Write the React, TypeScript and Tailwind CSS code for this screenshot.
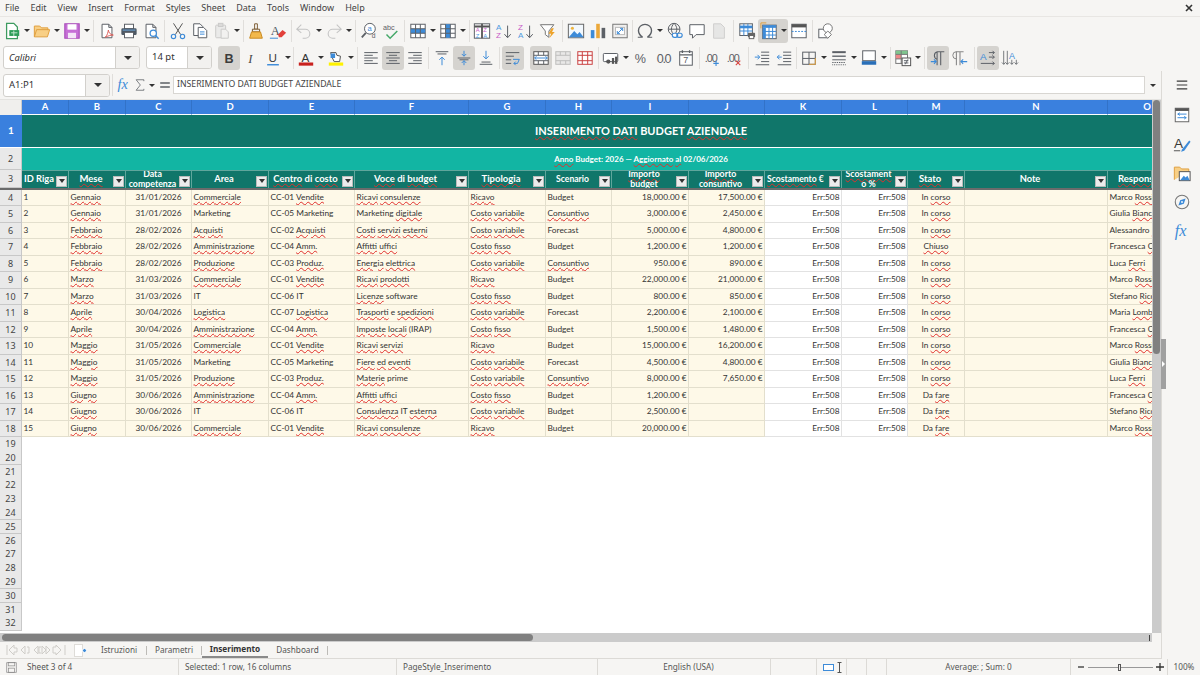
import React from "react";

const G = "#5c6066";
const B = "#3d8bd8";
const L = "#c4c4c4";

function S({ children, s = 18 }: { children?: React.ReactNode; s?: number }) {
  return (
    <svg width={s} height={s} viewBox="0 0 20 20" fill="none" stroke={G} strokeWidth={1.1}>
      {children}
    </svg>
  );
}

function Btn({ children, on, cls }: { children?: React.ReactNode; on?: boolean; cls?: string }) {
  return (
    <div className={`h-[24px] flex items-center justify-center shrink-0 rounded-[3px] ${cls ?? "w-[22px]"} ${on ? "bg-[#d5d3cf]" : ""}`}>
      {children}
    </div>
  );
}
function Arr({ on, cls }: { on?: boolean; cls?: string }) {
  return (
    <div className={`h-[24px] flex items-center justify-center shrink-0 ${cls ?? "w-[8px]"} ${on ? "bg-[#d5d3cf] rounded-r-[3px]" : ""}`}>
      <div className="w-0 h-0 border-l-[3px] border-r-[3px] border-t-[3px] border-l-transparent border-r-transparent border-t-[#333]" />
    </div>
  );
}
function Sep({ cls }: { cls: string }) {
  return (
    <div className={`h-[22px] flex justify-center shrink-0 ${cls}`}>
      <div className="w-px h-full bg-[#e0dedb]" />
    </div>
  );
}
const Doc = ({ c = G }: { c?: string }) => <path d="M4.5 2.5h7.5l3.5 3.5v11.5h-11zM12 2.5v3.5h3.5" stroke={c} fill="#fff" />;
const Lines = ({ d }: { d: string }) => <path d={d} />;

const IconSet: Record<string, React.ReactNode> = {
  new: <><path d="M4 1.5h8l4 4v13h-12z" stroke="#3d9b5f" fill="#fff" strokeWidth={1.4} /><rect x="7" y="9" width="11" height="6.5" fill="#2f9e5a" stroke="none" /><path d="M9 12h7M12 9.5v6" stroke="#bfe6cc" /></>,
  open: <path d="M1.5 16.5v-12h6l2 2h7v2.5M1.5 16.5l2.5-8h14.5l-2.5 8z" stroke="#e0a040" fill="#f8cf85" />,
  save: <><path d="M2 2h16v16h-16z" stroke="#a84bb8" fill="#c66fd6" strokeWidth={1.2} /><rect x="5" y="2.5" width="10" height="6" fill="#fff" stroke="none" /><rect x="5.5" y="12" width="9" height="6" fill="#f4e5f7" stroke="none" /></>,
  pdf: <><Doc /><path d="M8 17c3-3 3-6 3.5-8 .5 3 2 5 5.5 5.5-3 0-6 1-9 2.5z" stroke="#d9534f" strokeWidth={1} /></>,
  print: <><rect x="5" y="2.5" width="10" height="5" stroke={G} fill="#fff" /><rect x="1.5" y="7" width="17" height="7.5" rx="1.5" fill="#4d5864" stroke="none" /><rect x="5" y="11.5" width="10" height="6" fill="#fff" stroke={G} /><path d="M3 9h14" stroke="#6fa8dc" /></>,
  preview: <><Doc /><circle cx="12.5" cy="12.5" r="3.5" stroke={B} fill="#fff" strokeWidth={1.4} /><path d="M15 15l3.5 3.5" stroke={B} strokeWidth={1.6} /></>,
  cut: <><path d="M5 1.5l8 12.5M15 1.5l-8 12.5" stroke="#555" /><circle cx="5" cy="16" r="2.4" stroke={B} strokeWidth={1.3} /><circle cx="15" cy="16" r="2.4" stroke={B} strokeWidth={1.3} /></>,
  copy: <><path d="M3 2h7l3 3v10h-10z" fill="#fff" /><path d="M8 6h6l3.5 3.5v8h-9.5z" fill="#fff" /><path d="M10 11h5M10 13.5h5" stroke={B} /></>,
  paste: <g opacity=".45"><rect x="3" y="3.5" width="11" height="14" rx="1" fill="#ddd" stroke="#999" /><rect x="6" y="1.5" width="5" height="3.5" fill="#bbb" stroke="#999" /><path d="M9 8h5l3 3v7h-8z" fill="#eee" stroke="#999" /></g>,
  clone: <><path d="M8.5 2h3v6h-3z" stroke="#7a5a30" fill="#fff" /><path d="M6 8h8v3h-8z" stroke="#7a5a30" fill="#eee" /><path d="M5 11h10l2 7h-14z" fill="#f2b84b" stroke="#c98a20" /></>,
  clear: <><text x="2" y="14" fontSize="14" fill="#4a5560" stroke="none" fontFamily="Liberation Serif">A</text><path d="M10 14l5-5 4 3-5 5h-3z" fill="#e2403a" stroke="none" /><path d="M1 18h9" stroke={B} /></>,
  undo: <path d="M7 3l-5 5 5 4M2.5 8h9a5 5 0 0 1 0 10h-3" stroke={L} strokeWidth={1.2} />,
  redo: <path d="M13 3l5 5-5 4M17.5 8h-9a5 5 0 0 0 0 10h3" stroke={L} strokeWidth={1.2} />,
  find: <><circle cx="11" cy="7.5" r="6" fill="#fff" stroke={G} /><text x="8.2" y="10.5" fontSize="8.5" fill={B} stroke="none" fontFamily="Liberation Sans">a</text><path d="M6.5 12l-4.5 5" stroke={G} strokeWidth={2} /><text x="13" y="18" fontSize="7.5" fill={G} stroke="none" fontFamily="Liberation Sans">d</text></>,
  spell: <><text x="1" y="9" fontSize="8" fill={G} stroke="none" fontFamily="Liberation Sans">abc</text><path d="M5 14l4 4 8-8" stroke="#44a868" strokeWidth={1.6} /></>,
  row: <><rect x="2" y="2.5" width="16" height="15" fill="#fff" /><rect x="2" y="7.5" width="16" height="5" fill={B} stroke="none" /><path d="M7.3 2.5v15M12.6 2.5v15M2 7.5h16M2 12.5h16" /></>,
  col: <><rect x="2" y="2.5" width="16" height="15" fill="#fff" /><rect x="7.3" y="2.5" width="5.3" height="15" fill={B} stroke="none" /><path d="M7.3 2.5v15M12.6 2.5v15M2 7.5h16M2 12.5h16" /></>,
  sortc: <><rect x="1.5" y="2" width="17" height="16" fill="#fff" /><path d="M1.5 5h17M10 2v16" strokeWidth={2} stroke="#555" /><text x="3" y="11.5" fontSize="6.5" fill="#c75bc7" stroke="none" fontFamily="Liberation Sans">A</text><text x="3" y="17.5" fontSize="6.5" fill="#4f9ae0" stroke="none" fontFamily="Liberation Sans">Z</text><text x="11.5" y="11.5" fontSize="6.5" fill="#c75bc7" stroke="none" fontFamily="Liberation Sans">Z</text><text x="11.5" y="17.5" fontSize="6.5" fill="#4f9ae0" stroke="none" fontFamily="Liberation Sans">A</text></>,
  asc: <><text x="1" y="9" fontSize="9" fill="#4f9ae0" stroke="none" fontFamily="Liberation Sans">A</text><text x="1" y="18" fontSize="9" fill="#c75bc7" stroke="none" fontFamily="Liberation Sans">Z</text><path d="M14 4v13M10.5 13.5l3.5 4 3.5-4" /></>,
  desc: <><text x="1" y="9" fontSize="9" fill="#c75bc7" stroke="none" fontFamily="Liberation Sans">Z</text><text x="1" y="18" fontSize="9" fill="#4f9ae0" stroke="none" fontFamily="Liberation Sans">A</text><path d="M14 4v13M10.5 13.5l3.5 4 3.5-4" /></>,
  filter: <><path d="M1.5 3h15l-5.5 7v7l-4-3v-4z" fill="#fff" stroke="#777" /><path d="M14 7l-3.5 6h3l-2 5 6-7h-3l2-4z" fill="#eda32b" stroke="none" /></>,
  image: <><rect x="1.5" y="2.5" width="17" height="15" fill="#f2f8fd" stroke="#666" /><circle cx="6" cy="7" r="1.7" fill="#eeb33d" stroke="none" /><path d="M2 17l6-7 3.5 3.5 2.5-2.5 4.5 6z" fill={B} stroke="none" /></>,
  chart: <><rect x="2" y="9" width="4" height="9" fill={B} stroke="none" /><rect x="8" y="2" width="4" height="16" fill="#eba83a" stroke="none" /><rect x="14" y="6.5" width="4" height="11.5" fill="#5c6066" stroke="none" /></>,
  pivot: <><rect x="2" y="2.5" width="16" height="15" fill="#f0efee" stroke="#777" /><rect x="5" y="6" width="10" height="8" fill="#fff" stroke="#bbb" /><path d="M7 13l6-6M13 7h-3M13 7v3M7 13h3M7 13v-3" stroke={B} /></>,
  omega: <path d="M7.5 17.5h-5.500v-1.200h3.300c-2-1.500-3.300-4-3.300-6.800a8 7.500 0 0 1 16 0c0 2.800-1.300 5.300-3.300 6.800h3.300v1.200h-5.500v-1.700c2.200-1.300 4-3.600 4-6.300a6.500 6.200 0 0 0-13 0c0 2.700 1.800 5 4 6.300z" fill={G} stroke="none" />,
  link: <><circle cx="9" cy="8" r="6.5" /><path d="M2.5 8h13M9 1.5c-4 4-4 9 0 13M9 1.5c4 4 4 9 0 13" /><rect x="7" y="12.5" width="6" height="4.5" rx="2.2" fill="#fff" stroke={B} strokeWidth={1.3} /><rect x="12" y="12.5" width="6" height="4.5" rx="2.2" stroke={B} strokeWidth={1.3} /></>,
  comment: <path d="M2 3h16v11h-9l-4 4v-4h-3z" fill="#fff" />,
  header: <g opacity=".5"><path d="M4 2h8l4 4v12h-12z" fill="#d8d8d8" stroke="#aaa" /></g>,
  printarea: <><rect x="2" y="2" width="14" height="13" fill="#fff" /><path d="M2 5.5h14" stroke={B} strokeWidth={3} /><path d="M6.5 2v13M11 2v13M2 10h14" stroke={B} /><rect x="11" y="12" width="8" height="5" rx="1" fill="#666" stroke="none" /><rect x="12.5" y="15" width="5" height="3.5" fill="#fff" stroke="#666" /></>,
  freeze: <><rect x="3" y="3.5" width="15" height="15" fill="#fff" /><rect x="3" y="3.5" width="15" height="3" fill="#3d8bd8" stroke="none" /><rect x="3" y="6.5" width="3.5" height="12" fill="#3d8bd8" stroke="none" /><path d="M3 10.5h15M3 14.5h15M10 3.5v15M14 3.5v15" stroke="#3d8bd8" /><path d="M1 1v6M1 1h6" stroke="#e0a040" /></>,
  split: <><rect x="2" y="2.5" width="16" height="15" fill="#fff" /><rect x="2" y="2.5" width="16" height="3.5" fill="#555" stroke="none" /><path d="M2 10.5h16" stroke={B} strokeDasharray="2 1.5" /></>,
  shapes: <><rect x="2" y="8" width="10" height="9.5" fill="#fff" /><circle cx="12" cy="7" r="5" fill="#fff" stroke="#777" /><path d="M12 10l4 4-4 4-4-4z" fill="#fff" stroke="#777" /></>,
  b: <text x="5" y="15" fontSize="14" fontWeight="700" fill="#3c3c3c" stroke="none" fontFamily="Liberation Sans">B</text>,
  i: <text x="7" y="15" fontSize="14" fontStyle="italic" fill="#4a4a4a" stroke="none" fontFamily="Liberation Serif">I</text>,
  u: <><text x="5" y="14" fontSize="13" fill="#3c3c3c" stroke="none" fontFamily="Liberation Sans">U</text><path d="M3.5 17.5h13" stroke={B} strokeWidth={1.6} /></>,
  fc: <><text x="5" y="14" fontSize="13" fill="#333" stroke="none" fontFamily="Liberation Sans">A</text><rect x="2" y="15" width="16" height="3.5" fill="#c9211e" stroke="none" /></>,
  hl: <><path d="M4 4h6l1 3 4 1-1 6h-6l-2-4z" fill="#fff" stroke="#555" /><path d="M4 5h5v5h-5z" fill={B} stroke="none" /><rect x="2" y="15" width="16" height="3.5" fill="#fff200" stroke="none" /></>,
  al: <Lines d="M2.5 4h15M2.5 7h9.5M2.5 10h15M2.5 13h9.5M2.5 16h15" />,
  ac: <Lines d="M2.5 4h15M5.5 7h9M2.5 10h15M5.5 13h9M2.5 16h15" />,
  ar: <Lines d="M2.5 4h15M8 7h9.5M2.5 10h15M8 13h9.5M2.5 16h15" />,
  vt: <><path d="M3 3h14M5 5.5h10" /><path d="M10 18v-9M7 12l3-3 3 3" stroke={B} /></>,
  vm: <><path d="M3 10h14M5 12h10" /><path d="M10 2v6M7.5 5.5L10 8l2.5-2.5M10 18v-5M7.5 15.5L10 13l2.5 2.5" stroke={B} /></>,
  vb: <><path d="M3 17h14M5 14.5h10" /><path d="M10 2v9M7 8l3 3 3-3" stroke={B} /></>,
  wrap: <><path d="M2 4h15M2 8h9M2 12h6M2 16h6" /><path d="M10 11.5h7l-2 4.5h-4M13 14l-2 2 2 2" stroke={B} /></>,
  merge: <><rect x="2" y="3" width="16" height="14" fill="#fff" stroke="#555" /><path d="M2 7h16M2 13h16M7 3v4M13 3v4M7 13v4M13 13v4" /><path d="M3 10h14M5 8l-2 2 2 2M15 8l2 2-2 2" stroke={B} /></>,
  merge2: <g opacity=".5"><rect x="2" y="3" width="16" height="14" fill="#ddd" stroke="#888" /><path d="M2 7h16M2 13h16M7 3v4M13 3v4M7 13v4M13 13v4" stroke="#888" /></g>,
  unmerge: <><rect x="2" y="3" width="16" height="14" stroke="#c94040" fill="#fff" /><path d="M2 7h16M2 13h16M7 3v14M13 3v14" stroke="#c94040" /></>,
  cur: <><rect x="1.5" y="5" width="16" height="9" rx="1" fill="#fff" /><circle cx="7" cy="14" r="2.4" fill="#555" stroke="none" /><rect x="11" y="10" width="2.5" height="6.5" fill="#555" stroke="none" /><rect x="14.5" y="8.5" width="2.5" height="8" fill="#555" stroke="none" /></>,
  pct: <text x="2" y="15" fontSize="14" fill={G} stroke="none" fontFamily="Liberation Sans">%</text>,
  num: <text x="2" y="15" fontSize="14" fill={G} stroke="none" fontFamily="Liberation Sans" letterSpacing="-1.5">0.0</text>,
  date: <><rect x="3" y="3" width="14" height="15" fill="#fff" /><path d="M3 6.5h14M6 1.5v3M14 1.5v3" strokeWidth={1.5} /><text x="7" y="16" fontSize="10" fill={G} stroke="none" fontFamily="Liberation Sans">7</text></>,
  add: <><text x="2" y="14" fontSize="12" fill={G} stroke="none" fontFamily="Liberation Sans" letterSpacing="-1.2">.00</text><path d="M14.5 13v6M11.5 16h6" stroke={B} strokeWidth={1.2} /></>,
  del: <><text x="2" y="14" fontSize="12" fill={G} stroke="none" fontFamily="Liberation Sans" letterSpacing="-1.2">.00</text><path d="M12 13l5 5M17 13l-5 5" stroke="#d9443f" strokeWidth={1.2} /></>,
  ind: <><path d="M9 3.5h9M9 7h9M9 10.5h9M9 14h9M3 17.5h15" /><path d="M2 9h5M5 6.5L7.5 9 5 11.5" stroke={B} /></>,
  out: <><path d="M9 3.5h9M9 7h9M9 10.5h9M9 14h9M3 17.5h15" /><path d="M2.5 9h5M5 6.5L2.5 9 5 11.5" stroke={B} /></>,
  bord: <><rect x="3" y="3.5" width="14" height="13.5" /><path d="M10 3.5v13.5M3 10.5h14" /><path d="M10 17h7v-7" stroke="#e0a040" /></>,
  bstyle: <><path d="M2.5 3.5h15" strokeWidth={2.2} /><path d="M2.5 8h15" strokeWidth={1.5} /><path d="M2.5 12h15" /><path d="M2.5 15h15" strokeDasharray="1.5 1" /><path d="M2.5 17.5h15" strokeDasharray="1 1" /></>,
  bcol: <><rect x="3" y="2" width="14" height="11" fill="#fff" /><path d="M2 15.5h16" stroke="#2a6fb8" strokeWidth={4} /></>,
  cond: <><rect x="2" y="2" width="13" height="14" fill="#fff" stroke="#777" /><rect x="2" y="2" width="13" height="4" fill="#7fc58e" stroke="none" /><rect x="2" y="6" width="6" height="5" fill="#e88" stroke="none" /><path d="M2 6h13M2 11h13M8 2v14" stroke="#777" /><rect x="9" y="10" width="9.5" height="8.5" fill="#fff" stroke="#555" /><path d="M11 13h5M11 15.5h5M15.5 11.5l-3 5.5" /></>,
  ltr: <><path d="M9 18V3h8M13 3v15M9 3a4.5 4.5 0 0 0 0 8.5" strokeWidth={1.2} /><path d="M2 14h6M5.5 11.5L8 14l-2.500 2.500" stroke={B} strokeWidth={1.2} /></>,
  rtl: <><path d="M6 18V3h8M10 3v15" strokeWidth={1.2} stroke="#888" /><path d="M6 3a4 4 0 0 0 0 8" stroke="#888" /><path d="M11 14h7M13.5 11.5L11 14l2.5 2.5" stroke={B} strokeWidth={1.2} /></>,
  hz: <><text x="1" y="12" fontSize="11" fill={B} stroke="none" fontFamily="Liberation Sans">A</text><path d="M11 4h6M15 2l2 2-2 2M11 9h6M15 7l2 2-2 2M2 16h15M15 14l2 2-2 2" /></>,
  vz: <><text x="9" y="11" fontSize="10" fill={B} stroke="none" fontFamily="Liberation Sans">A</text><path d="M3 2v15M1 15l2 2 2-2M7 2v15M5 15l2 2 2-2M12 12v5M10 15l2 2 2-2M17 12v5M15 15l2 2 2-2" strokeWidth={.9} /></>,
  menu: <path d="M2.5 4.5h15M2.5 10h15M2.5 15.5h15" stroke="#3a3a3a" strokeWidth={1.7} />,
  deck: <><rect x="2.5" y="2.5" width="15" height="15" fill="#fff" stroke="#666" /><rect x="2.5" y="2.5" width="15" height="3" fill="#555" stroke="none" /><path d="M5 9h10M5 13h10M7.5 7.500l-2 1.500 2 1.500M12.500 11.500l2 1.500-2 1.500" stroke={B} /></>,
  styles: <><text x="1" y="14" fontSize="15" fill="#3a3a3a" stroke="none" fontFamily="Liberation Sans">A</text><path d="M10 16l8-10 1.5 1.5-7 10-3.5 1z" fill={B} stroke="none" /><path d="M1 17.5h7" stroke="#555" /></>,
  gal: <><path d="M1.5 17.5v-14h6l2 2h8v3" stroke="#e0a040" fill="#f8cf85" /><rect x="7" y="8.5" width="12" height="10" fill="#fff" stroke="#555" /><path d="M8 18l4-5 2 2 2-2 2.5 5z" fill={B} stroke="none" /></>,
  nav: <><circle cx="10" cy="10" r="7.5" stroke="#777" strokeWidth={1.2} /><path d="M14 6l-2 6-6 2 2-6z" fill={B} stroke="none" /><circle cx="10" cy="10" r="1" fill="#fff" stroke="none" /></>,
  fx: <text x="2" y="15.5" fontSize="18" fontStyle="italic" fill={B} stroke="none" fontFamily="Liberation Serif">fx</text>,
  sigma: <path d="M15.500 4.500v-2h-11l6 7.500-6 7.500h11v-2" stroke={G} strokeWidth={1.1} />,
  eq: <path d="M4 7.5h12M4 12.5h12" stroke={G} strokeWidth={1.6} />,
  disk: <><path d="M2.5 2.5h15v15h-15z" stroke="#8a8a8a" fill="none" /><rect x="5" y="2.5" width="10" height="5" stroke="#8a8a8a" /><rect x="5.5" y="11" width="9" height="6.5" stroke="#8a8a8a" /></>,
};
const I = ({ n, s }: { n: string; s?: number }) => <S s={s}>{IconSet[n]}</S>;

const SAFE = new Set(["Marketing", "IT", "Budget", "BUDGET", "Forecast", "software", "prime", "In", "e", "Da", "di", "Riga", "(IRAP)", "Budget:", "2026", "—", "02/06/2026", "%", "€", "Note", "Area", "ID", "Data", "Maria", "Marco", "Luca", "Giulia", "Stefano", "Francesca", "Alessandro", "Scenario"]);
function W({ t }: { t: string }) {
  const parts = t.split(" ");
  return (
    <>
      {parts.map((p, i) => (
        <React.Fragment key={i}>
          {SAFE.has(p) || /^CC-|^\d/.test(p) ? p : (
            <span className="underline decoration-wavy decoration-[#e0302c] decoration-1 underline-offset-[0.5px]">{p}</span>
          )}
          {i < parts.length - 1 ? " " : ""}
        </React.Fragment>
      ))}
    </>
  );
}

const GRID = "grid grid-cols-[22px_47px_57px_66px_77px_86px_114px_77px_66px_77px_76px_77px_66px_57px_143px_44px]";
const LETTERS = "ABCDEFGHIJKLMN".split("");
const FONT = "font-['Lato','Liberation_Sans',sans-serif]";
const UI = "font-['Noto_Sans','Open_Sans',sans-serif]";

const HEAD: [string, string?][] = [
  ["ID Riga", "big"], ["Mese"], ["Data competenza", "wrap"], ["Area", "big"], ["Centro di costo"], ["Voce di budget"],
  ["Tipologia"], ["Scenario", "sc"], ["Importo budget", "wrap"], ["Importo consuntivo", "wrap"], ["Scostamento €", "sc"],
  ["Scostamento %", "wrap"], ["Stato"], ["Note", "big"], ["Responsabile"],
];

const DATA = [
  ["1", "Gennaio", "31/01/2026", "Commerciale", "CC-01 Vendite", "Ricavi consulenze", "Ricavo", "Budget", "18,000.00 €", "17,500.00 €", "In corso", "Marco Rossi"],
  ["2", "Gennaio", "31/01/2026", "Marketing", "CC-05 Marketing", "Marketing digitale", "Costo variabile", "Consuntivo", "3,000.00 €", "2,450.00 €", "In corso", "Giulia Bianchi"],
  ["3", "Febbraio", "28/02/2026", "Acquisti", "CC-02 Acquisti", "Costi servizi esterni", "Costo variabile", "Forecast", "5,000.00 €", "4,800.00 €", "In corso", "Alessandro Bruno"],
  ["4", "Febbraio", "28/02/2026", "Amministrazione", "CC-04 Amm.", "Affitti uffici", "Costo fisso", "Budget", "1,200.00 €", "1,200.00 €", "Chiuso", "Francesca Conti"],
  ["5", "Febbraio", "28/02/2026", "Produzione", "CC-03 Produz.", "Energia elettrica", "Costo variabile", "Consuntivo", "950.00 €", "890.00 €", "In corso", "Luca Ferri"],
  ["6", "Marzo", "31/03/2026", "Commerciale", "CC-01 Vendite", "Ricavi prodotti", "Ricavo", "Budget", "22,000.00 €", "21,000.00 €", "In corso", "Marco Rossi"],
  ["7", "Marzo", "31/03/2026", "IT", "CC-06 IT", "Licenze software", "Costo fisso", "Budget", "800.00 €", "850.00 €", "In corso", "Stefano Ricci"],
  ["8", "Aprile", "30/04/2026", "Logistica", "CC-07 Logistica", "Trasporti e spedizioni", "Costo variabile", "Forecast", "2,200.00 €", "2,100.00 €", "In corso", "Maria Lombardi"],
  ["9", "Aprile", "30/04/2026", "Amministrazione", "CC-04 Amm.", "Imposte locali (IRAP)", "Costo fisso", "Budget", "1,500.00 €", "1,480.00 €", "In corso", "Francesca Conti"],
  ["10", "Maggio", "31/05/2026", "Commerciale", "CC-01 Vendite", "Ricavi servizi", "Ricavo", "Budget", "15,000.00 €", "16,200.00 €", "In corso", "Marco Rossi"],
  ["11", "Maggio", "31/05/2026", "Marketing", "CC-05 Marketing", "Fiere ed eventi", "Costo variabile", "Forecast", "4,500.00 €", "4,800.00 €", "In corso", "Giulia Bianchi"],
  ["12", "Maggio", "31/05/2026", "Produzione", "CC-03 Produz.", "Materie prime", "Costo variabile", "Consuntivo", "8,000.00 €", "7,650.00 €", "In corso", "Luca Ferri"],
  ["13", "Giugno", "30/06/2026", "Amministrazione", "CC-04 Amm.", "Affitti uffici", "Costo fisso", "Budget", "1,200.00 €", "", "Da fare", "Francesca Conti"],
  ["14", "Giugno", "30/06/2026", "IT", "CC-06 IT", "Consulenza IT esterna", "Costo variabile", "Budget", "2,500.00 €", "", "Da fare", "Stefano Ricci"],
  ["15", "Giugno", "30/06/2026", "Commerciale", "CC-01 Vendite", "Ricavi consulenze", "Ricavo", "Budget", "20,000.00 €", "", "Da fare", "Marco Rossi"],
];

function RowHead({ n, cls }: { n: number; cls?: string }) {
  return (
    <div className={`flex items-center justify-center border-b border-r border-[#c8c8c8] bg-[#e9e9e9] text-[#444] text-[9px] ${UI} ${cls ?? ""}`}>{n}</div>
  );
}

function Cell({ children, cls }: { children?: React.ReactNode; cls: string }) {
  return (
    <div className={`overflow-hidden whitespace-nowrap flex items-center text-[8.3px] leading-none text-[#333] border-r border-b px-[1.5px] pb-[1px] ${cls}`}>
      <span className="whitespace-nowrap">{children}</span>
    </div>
  );
}
const Y = "bg-[#fef9e8] border-[#e3dfcd]";
const WH = "bg-white border-[#e2e2e2]";

const headText = (k?: string) =>
  k === "wrap"
    ? "text-[8.8px] leading-[10px] block max-w-[50px] [overflow-wrap:anywhere]"
    : k === "big"
    ? "text-[9.3px] whitespace-nowrap"
    : k === "sc"
    ? "text-[8.6px] whitespace-nowrap"
    : "text-[9.5px] whitespace-nowrap";

function Sheet() {
  return (
    <div className={`flex-1 min-h-0 flex flex-col overflow-hidden bg-white ${FONT}`}>
      <div className={`${GRID} h-[14.5px] shrink-0`}>
        <div className="bg-[#f0efed] border-r border-[#ccc]" />
        {LETTERS.map((l) => (
          <div key={l} className="bg-[#3a80de] border-r border-[#3272c8] border-b border-b-white flex items-center justify-center text-white text-[9.5px] font-bold">{l}</div>
        ))}
        <div className="bg-[#3a80de] border-b border-white overflow-hidden flex justify-end pr-[1px] text-white text-[9.5px] font-bold items-center">O</div>
      </div>
      <div className={`${GRID} h-[33.5px] shrink-0`}>
        <div className="bg-[#3a80de] flex items-center justify-center text-white text-[10px] font-bold border-b border-white">1</div>
        <div className="col-[2/-1] bg-[#10766a] border-b border-white flex items-center justify-center pl-[108px] text-white text-[11px] font-bold">
          <span><W t="INSERIMENTO DATI BUDGET AZIENDALE" /></span>
        </div>
      </div>
      <div className={`${GRID} h-[22px] shrink-0`}>
        <RowHead n={2} />
        <div className="col-[2/-1] bg-[#12b5a3] flex items-center justify-center pl-[108px] text-white text-[8px] font-bold">
          <span><W t="Anno Budget: 2026 — Aggiornato al 02/06/2026" /></span>
        </div>
      </div>
      <div className={`${GRID} h-[19.5px] shrink-0 border-b-2 border-[#6b6b6b]`}>
        <RowHead n={3} />
        {HEAD.map(([h, k], i) => (
          <div key={i} className={`relative bg-[#10766a] border-r border-[#5fa69c] border-t border-t-[#5fa69c] flex items-center overflow-hidden ${i === 10 ? "pl-[2px] justify-start" : i === 14 ? "pl-[10px] justify-start" : "pr-[12px] justify-center"}`}>
            <span className={`text-white font-bold text-center ${headText(k)}`}><W t={h} /></span>
            {i < 14 && (
              <div className="absolute right-[1px] bottom-[1px] w-[11px] h-[11px] bg-[#ececec] border border-[#bbb] flex items-center justify-center">
                <div className="w-0 h-0 border-l-[3.5px] border-r-[3.5px] border-t-[4px] border-l-transparent border-r-transparent border-t-[#333]" />
              </div>
            )}
          </div>
        ))}
      </div>
      {DATA.map((d, i) => (
        <div key={i} className={`${GRID} h-[16.5px] shrink-0`}>
          <RowHead n={i + 4} />
          {d.slice(0, 8).map((v, j) => (
            <Cell key={j} cls={`${Y} ${j === 2 ? "justify-center" : ""}`}><W t={v} /></Cell>
          ))}
          <Cell cls={`${Y} justify-end`}>{d[8]}</Cell>
          <Cell cls={`${Y} justify-end`}>{d[9]}</Cell>
          <Cell cls={`${WH} justify-end`}>Err:508</Cell>
          <Cell cls={`${WH} justify-end`}>Err:508</Cell>
          <Cell cls={`${Y} justify-center`}><W t={d[10]} /></Cell>
          <Cell cls={Y} />
          <Cell cls={`${Y} !border-r-0`}><W t={d[11]} /></Cell>
        </div>
      ))}
      {Array.from({ length: 14 }, (_, i) => (
        <div key={i} className={`${GRID} h-[13.8px] shrink-0`}>
          <RowHead n={19 + i} />
        </div>
      ))}
    </div>
  );
}

function NameBox({ text, w, dw, fs }: { text: string; w: string; dw: string; fs: string }) {
  return (
    <div className={`h-[23px] ${w} shrink-0 flex rounded-[3px] border border-[#d2d0cc] bg-white overflow-hidden`}>
      <div className={`flex-1 flex items-center pl-[5px] text-[#333] ${fs}`}>{text}</div>
      <div className={`${dw} bg-[#f2f1ef] border-l border-[#d2d0cc] flex items-center justify-center`}>
        <div className="w-0 h-0 border-l-[4px] border-r-[4px] border-t-[4px] border-l-transparent border-r-transparent border-t-[#333]" />
      </div>
    </div>
  );
}

function TabSep() {
  return <div className="w-px h-[9px] bg-[#bdbbb7]" />;
}

function StatusCell({ cls, children }: { cls: string; children?: React.ReactNode }) {
  return <div className={`h-full flex items-center shrink-0 border-r border-[#dcdad6] ${cls}`}>{children}</div>;
}

export default function App() {
  return (
    <div className={`w-[1200px] h-[675px] overflow-hidden flex flex-col bg-[#f6f5f3] text-[#3a3a3a] ${UI}`}>
      {/* menu */}
      <div className="h-[17px] shrink-0 flex items-center pl-[5px] pr-[7px] text-[9px] text-[#444] border-b border-[#e8e6e3]">
        <div className="flex gap-[11px] flex-1">
          {["File", "Edit", "View", "Insert", "Format", "Styles", "Sheet", "Data", "Tools", "Window", "Help"].map((m) => (
            <span key={m}>{m}</span>
          ))}
        </div>
        <svg width="8" height="8" viewBox="0 0 8 8" stroke="#333" strokeWidth={1.6}><path d="M1 1l6 6M7 1L1 7" /></svg>
      </div>
      {/* toolbar 1 */}
      <div className="h-[27px] shrink-0 flex items-center pl-[1px]">
        <Btn><I n="new" /></Btn><Arr /><Btn><I n="open" /></Btn><Arr /><Btn><I n="save" /></Btn><Arr />
        <Sep cls="w-[5px]" />
        <Btn><I n="pdf" /></Btn><Btn><I n="print" /></Btn><Btn><I n="preview" /></Btn>
        <Sep cls="w-[5px]" />
        <Btn><I n="cut" /></Btn><Btn><I n="copy" /></Btn><Btn><I n="paste" /></Btn><Arr />
        <Sep cls="w-[4px]" />
        <Btn><I n="clone" /></Btn><Btn><I n="clear" /></Btn>
        <Sep cls="w-[4px]" />
        <Btn><I n="undo" /></Btn><Arr /><Btn><I n="redo" /></Btn><Arr />
        <Sep cls="w-[5px]" />
        <Btn><I n="find" /></Btn><Btn><I n="spell" /></Btn>
        <Sep cls="w-[5px]" />
        <Btn><I n="row" /></Btn><Arr /><Btn><I n="col" /></Btn><Arr />
        <Sep cls="w-[4px]" />
        <Btn><I n="sortc" /></Btn><Btn><I n="asc" /></Btn><Btn><I n="desc" /></Btn><Btn><I n="filter" /></Btn>
        <Sep cls="w-[6px]" />
        <Btn><I n="image" /></Btn><Btn><I n="chart" /></Btn><Btn><I n="pivot" /></Btn>
        <Sep cls="w-[3px]" />
        <Btn><I n="omega" /></Btn><Arr /><Btn><I n="link" /></Btn><Btn><I n="comment" /></Btn><Btn><I n="header" /></Btn>
        <Sep cls="w-[6px]" />
        <Btn><I n="printarea" /></Btn>
        <Btn on cls="w-[22px] rounded-r-none"><I n="freeze" /></Btn><Arr on />
        <Btn><I n="split" /></Btn>
        <Sep cls="w-[5px]" />
        <Btn><I n="shapes" /></Btn>
      </div>
      {/* toolbar 2 */}
      <div className="h-[27px] shrink-0 flex items-center pl-[3px]">
        <div className="w-[137px] shrink-0 italic"><NameBox text="Calibri" w="w-[137px]" dw="w-[24px]" fs="text-[9.3px]" /></div>
        <div className="w-[6px] shrink-0" />
        <NameBox text="14 pt" w="w-[66px]" dw="w-[24px]" fs="text-[9.5px]" />
        <div className="w-[6px] shrink-0" />
        <Btn on><I n="b" /></Btn><Btn><I n="i" /></Btn><Btn><I n="u" /></Btn><Arr />
        <Sep cls="w-[3px]" />
        <Btn><I n="fc" /></Btn><Arr /><Btn><I n="hl" /></Btn><Arr />
        <Sep cls="w-[5px]" />
        <Btn><I n="al" /></Btn><Btn on><I n="ac" /></Btn><Btn><I n="ar" /></Btn>
        <Sep cls="w-[5px]" />
        <Btn><I n="vt" /></Btn><Btn on><I n="vm" /></Btn><Btn><I n="vb" /></Btn>
        <Sep cls="w-[5px]" />
        <Btn on><I n="wrap" /></Btn>
        <div className="w-[6px] shrink-0" />
        <Btn on><I n="merge" /></Btn><Btn><I n="merge2" /></Btn><Btn><I n="unmerge" /></Btn>
        <Sep cls="w-[4px]" />
        <Btn><I n="cur" /></Btn><Arr />
        <div className="w-[1px] shrink-0" />
        <Btn><I n="pct" /></Btn><Btn><I n="num" /></Btn><Btn><I n="date" /></Btn>
        <Sep cls="w-[4px]" />
        <Btn><I n="add" /></Btn><Btn><I n="del" /></Btn>
        <Sep cls="w-[6px]" />
        <Btn><I n="ind" /></Btn><Btn><I n="out" /></Btn>
        <Sep cls="w-[3px]" />
        <Btn><I n="bord" /></Btn><Arr /><Btn><I n="bstyle" /></Btn><Arr /><Btn><I n="bcol" /></Btn><Arr />
        <Sep cls="w-[4px]" />
        <Btn><I n="cond" /></Btn><Arr />
        <Sep cls="w-[5px]" />
        <Btn on><I n="ltr" /></Btn><Btn><I n="rtl" /></Btn>
        <Sep cls="w-[6px]" />
        <Btn on><I n="hz" /></Btn><Btn><I n="vz" /></Btn>
      </div>
      {/* body */}
      <div className="flex-1 min-h-0 flex">
        <div className="w-[1161px] shrink-0 flex flex-col min-h-0">
          {/* formula */}
          <div className="h-[28px] shrink-0 flex items-center pl-[3px] pr-[1px]">
            <NameBox text="A1:P1" w="w-[107px]" dw="w-[24px]" fs="text-[9.5px]" />
            <Sep cls="w-[5px]" />
            <Btn cls="w-[18px]"><I n="fx" s={16} /></Btn>
            <Btn cls="w-[14px]"><I n="sigma" s={16} /></Btn>
            <Arr cls="w-[9px]" />
            <Btn cls="w-[17px]"><I n="eq" s={16} /></Btn>
            <div className="flex-1 h-[18px] bg-white border border-[#d8d6d2] flex items-center pl-[3px] text-[8.7px] text-[#444]">INSERIMENTO DATI BUDGET AZIENDALE</div>
            <Arr cls="w-[15px]" />
          </div>
          <div className="h-px shrink-0 bg-[#e4e3e0]" />
          {/* sheet + vertical scrollbar */}
          <div className="flex-1 min-h-0 flex">
            <div className="w-[1152px] shrink-0 flex flex-col min-h-0"><Sheet /></div>
            <div className="w-[9px] shrink-0 bg-[#cbcbcb] pl-px">
              <div className="w-[7px] h-[254px] bg-[#808080] rounded-full" />
            </div>
          </div>
          {/* horizontal scrollbar */}
          <div className="h-[9px] shrink-0 flex">
            <div className="w-[1152px] bg-[#cbcbcb] pl-[2px] flex items-center relative">
              <div className="w-[531px] h-[7px] bg-[#808080] rounded-full" />
              <div className="absolute right-[2px] top-[2px] w-px h-[6px] bg-[#444]" />
            </div>
          </div>
          {/* tabs */}
          <div className="h-[17px] shrink-0 flex items-center text-[8.2px] text-[#555] border-b border-[#dcdad6]">
            <div className="w-[69px] shrink-0 pl-[6px] flex items-center">
              <svg width="62" height="12" viewBox="0 0 62 12" fill="none" stroke="#cfcdc9" strokeWidth={1}>
                <path d="M1 1v10M3 6l5-5v3h3v4h-3v3zM15 6l4-4v8zM21 3h2v6h-2M28 6l4-4v8zM35 3h-2v6h2M40 6l-4-4v8zM44 6l-4-4v8zM47 3h3v-2l5 5-5 5v-2h-3zM59 1v10" />
              </svg>
            </div>
            <div className="w-[23px] shrink-0 flex items-center pl-[5px]">
              <div className="w-[9px] h-[13px] bg-white border border-[#dedcd8] relative">
                <div className="absolute left-[7px] top-[3px] w-[5px] h-[5px] bg-[#3d8bd8] rounded-full border border-[#fff]" />
              </div>
            </div>
            <div className="w-[54px] text-center shrink-0">Istruzioni</div>
            <TabSep />
            <div className="w-[54px] text-center shrink-0">Parametri</div>
            <TabSep />
            <div className="w-[66px] h-full flex items-center justify-center shrink-0 font-bold text-[#333] border-b-2 border-[#8a8a8a]">Inserimento</div>
            <div className="w-[59px] text-center shrink-0">Dashboard</div>
            <TabSep />
          </div>
        </div>
        {/* sidebar */}
        <div className="flex-1 relative border-l border-[#dcdad6] flex flex-col items-center pt-[2px]">
          <div className="absolute -left-[1px] top-[268px] w-[5px] h-[50px] bg-[#a0a0a0] flex items-center justify-center">
            <div className="w-0 h-0 border-t-[3px] border-b-[3px] border-l-[3px] border-t-transparent border-b-transparent border-l-white" />
          </div>
          <div className="h-[24px] flex items-center pl-[2px]"><I n="menu" s={14} /></div>
          <div className="h-[9px] w-full" />
          <div className="flex flex-col gap-[11px] items-center pl-[2px]">
            <I n="deck" /><I n="styles" /><I n="gal" /><I n="nav" /><I n="fx" />
          </div>
        </div>
      </div>
      {/* status */}
      <div className="h-[16px] shrink-0 flex items-center text-[8.2px] text-[#555]">
        <StatusCell cls="w-[179px] pl-[5px] gap-[9px]"><I n="disk" s={13} /><span>Sheet 3 of 4</span></StatusCell>
        <StatusCell cls="w-[218px] pl-[6px]">Selected: 1 row, 16 columns</StatusCell>
        <StatusCell cls="w-[201px] pl-[6px]">PageStyle_Inserimento</StatusCell>
        <StatusCell cls="w-[173px] justify-center pl-[9px]">English (USA)</StatusCell>
        <StatusCell cls="w-[46px]" />
        <StatusCell cls="w-[30px] gap-[3px] pl-[6px]">
          <div className="w-[11px] h-[7px] border border-[#3d8bd8] bg-white shrink-0" />
          <svg width="5" height="11" viewBox="0 0 5 11" stroke="#555" fill="none"><path d="M2.5 1v9M0.5 .5h4M0.5 10.5h4" /></svg>
        </StatusCell>
        <StatusCell cls="w-[20px]" />
        <StatusCell cls="w-[20px]" />
        <StatusCell cls="w-[184px] justify-center">Average: ; Sum: 0</StatusCell>
        <StatusCell cls="w-[97px] pl-[6px] gap-[3px]">
          <svg width="8" height="8" viewBox="0 0 8 8" stroke="#333" strokeWidth={1.3}><path d="M1 4h6" /></svg>
          <div className="w-[65px] h-px bg-[#999] relative">
            <div className="absolute left-[30px] -top-[3px] w-[3px] h-[7px] border border-[#555] bg-[#eee]" />
          </div>
          <svg width="8" height="8" viewBox="0 0 8 8" stroke="#333" strokeWidth={1.3}><path d="M0 4h8M4 0v8" /></svg>
        </StatusCell>
        <div className="flex-1 text-center">100%</div>
      </div>
    </div>
  );
}
